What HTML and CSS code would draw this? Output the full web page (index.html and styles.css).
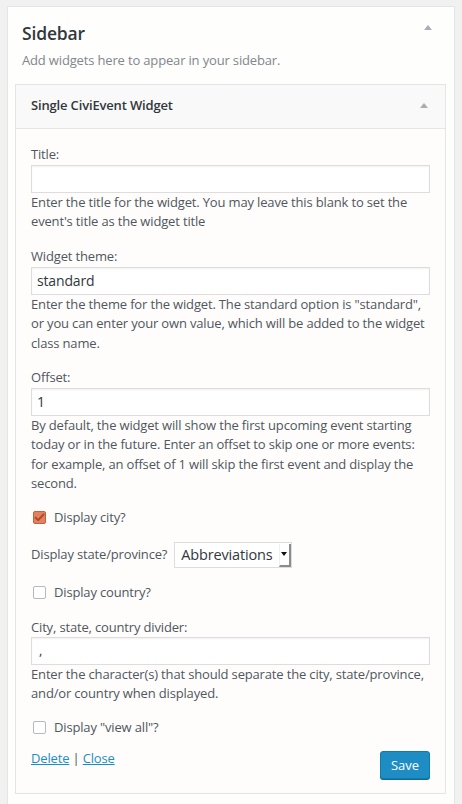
FILE: index.html
```html
<!DOCTYPE html>
<html lang="en">
<head>
<meta charset="utf-8">
<title>Sidebar widget</title>
<link rel="stylesheet" href="styles.css">
</head>
<body>
<div class="sidebar">
  <div class="sidebar-head">
    <div class="sidebar-text">
      <h2 class="sidebar-title">Sidebar</h2>
      <p class="sidebar-desc">Add widgets here to appear in your sidebar.</p>
    </div>
    <span class="arrow arrow-sidebar"></span>
  </div>
  <div class="widget">
    <div class="widget-top">
      <h3 class="widget-title">Single CiviEvent Widget</h3>
      <span class="arrow"></span>
    </div>
    <div class="widget-inside">
      <div class="field f-title">
        <label class="label">Title:</label>
        <div class="input"></div>
        <p class="desc">Enter the title for the widget. You may leave this blank to set the event's title as the widget title</p>
      </div>
      <div class="field f-theme">
        <label class="label">Widget theme:</label>
        <div class="input">standard</div>
        <p class="desc">Enter the theme for the widget. The standard option is "standard", or you can enter your own value, which will be added to the widget class name.</p>
      </div>
      <div class="field f-offset">
        <label class="label">Offset:</label>
        <div class="input">1</div>
        <p class="desc">By default, the widget will show the first upcoming event starting today or in the future. Enter an offset to skip one or more events: for example, an offset of 1 will skip the first event and display the second.</p>
      </div>
      <div class="check-row f-city">
        <span class="checkbox checked">
          <svg viewBox="0 0 13 13" width="13" height="13"><path d="M2.6 6.6 L5.2 9.2 L10.6 3.4" fill="none" stroke="#a9482d" stroke-width="1.9" stroke-linecap="round" stroke-linejoin="round"/></svg>
        </span>
        <span class="check-label">Display city?</span>
      </div>
      <div class="select-row f-state">
        <span class="select-label">Display state/province?</span>
        <span class="select">
          <span class="select-value">Abbreviations</span>
          <span class="select-btn"><span class="select-tri"></span></span>
        </span>
      </div>
      <div class="check-row f-country">
        <span class="checkbox"></span>
        <span class="check-label">Display country?</span>
      </div>
      <div class="field f-divider">
        <label class="label">City, state, country divider:</label>
        <div class="input input-small">,</div>
        <p class="desc">Enter the character(s) that should separate the city, state/province, and/or country when displayed.</p>
      </div>
      <div class="check-row f-viewall">
        <span class="checkbox"></span>
        <span class="check-label">Display "view all"?</span>
      </div>
      <div class="controls">
        <div class="links"><a class="link" href="#">Delete</a> <span class="sep">|</span> <a class="link" href="#">Close</a></div>
        <button class="save" type="button">Save</button>
      </div>
    </div>
  </div>
</div>
</body>
</html>
```

FILE: styles.css
```css
* { box-sizing: border-box; }
html, body { margin: 0; padding: 0; }
body {
  background: #f1f1f1;
  font-family: "Open Sans", "Liberation Sans", sans-serif;
  font-size: 13px;
  letter-spacing: -0.16px;
  line-height: 1.5;
  color: #50575e;
  height: 804px;
  overflow: hidden;
}
.sidebar {
  margin: 6px 7px 0 7px;
  border: 1px solid #e5e5e5;
  background: #fefefd;
  padding: 0 8px 40px 7px;
}
.sidebar-head {
  display: flex;
  justify-content: space-between;
  align-items: flex-start;
  padding: 13px 14px 14px 7px;
}
.sidebar-title {
  margin: 0;
  font-size: 17.5px;
  font-weight: 600;
  line-height: 26px;
  color: #32373c;
}
.sidebar-desc {
  margin: 4px 0 0;
  color: #82878c;
  line-height: 20px;
}
.arrow {
  width: 0;
  height: 0;
  border-left: 4px solid transparent;
  border-right: 4px solid transparent;
  border-bottom: 5px solid #a8adb2;
}
.arrow-sidebar { margin-top: 5px; }
.widget {
  border: 1px solid #e5e5e5;
  background: #fefdfc;
}
.widget-top {
  height: 44px;
  background: #f9f9f9;
  border-bottom: 1px solid #e5e5e5;
  display: flex;
  justify-content: space-between;
  align-items: center;
  padding: 0 17px 2px 15px;
}
.widget-title {
  margin: 0;
  font-size: 13px;
  font-weight: 600;
  color: #32373c;
}
.widget-inside {
  padding: 15px 15px 14px;
  display: flex;
  flex-direction: column;
}
.field, .check-row, .select-row { margin-bottom: 14px; }
.label { display: block; line-height: 20px; }
.input {
  height: 28px;
  border: 1px solid #dddddd;
  background: #fff;
  box-shadow: inset 0 1px 2px rgba(0,0,0,0.06);
  font-size: 14px;
  line-height: 25px;
  padding: 0 5px;
  color: #32373c;
  margin-top: 1px;
}
.input-small { font-size: 13px; line-height: 24px; padding-left: 7px; }
.desc { margin: 0; line-height: 19.4px; }
.check-row {
  display: flex;
  align-items: center;
  height: 20px;
}
.f-country { margin-top: 1px; }
.f-divider .input { margin-top: 0; }
.checkbox {
  width: 13px;
  height: 13px;
  border: 1px solid #b4b9be;
  border-radius: 2px;
  background: #fff;
  margin: 0 8px 0 2px;
  display: flex;
  flex: none;
}
.checkbox.checked {
  background: #e5805e;
  border-color: #c4613f;
}
.checkbox svg { margin: -1px; }
.select-row {
  display: flex;
  align-items: center;
  height: 26px;
}
.select {
  display: flex;
  align-items: stretch;
  height: 26px;
  margin-left: 7px;
  border: 1px solid #dddddd;
  background: #fff;
}
.select-value {
  font-size: 14.5px;
  line-height: 24px;
  padding: 0 6px 0 6px;
  color: #32373c;
}
.select-btn {
  width: 12px;
  margin: 1px 0 0 0;
  border-left: 1px solid #f0f0f0;
  border-right: 2px solid #8c8c8c;
  border-bottom: 2px solid #8c8c8c;
  display: flex;
  align-items: center;
  justify-content: center;
}
.select-tri {
  width: 0;
  height: 0;
  border-left: 3px solid transparent;
  border-right: 3px solid transparent;
  border-top: 4px solid #111;
}
.controls {
  display: flex;
  justify-content: space-between;
  align-items: flex-start;
  margin-top: -3px;
}
.links { line-height: 20px; }
.link { color: #1a8fc4; text-decoration: underline; }
.sep { color: #50575e; }
.save {
  margin-top: 3px;
  height: 28px;
  width: 50px;
  background: #1d8dc3;
  border: 1px solid #117bad;
  border-radius: 3px;
  box-shadow: 0 1px 0 #0d6a95;
  color: #fff;
  font-family: "Open Sans", "Liberation Sans", sans-serif;
  font-size: 13px;
  padding: 0;
  line-height: 24px;
}
```
